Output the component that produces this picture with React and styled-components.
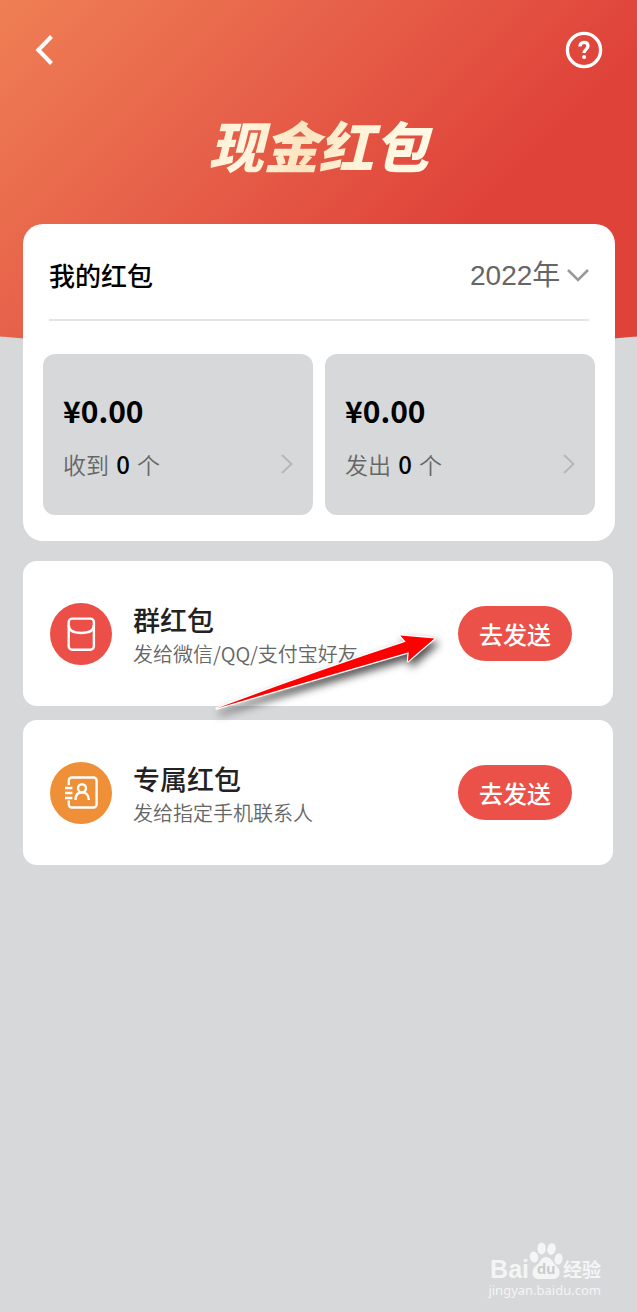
import React, { useState } from 'react'
import styled, { createGlobalStyle } from 'styled-components'

const rows = [
    { id: 'group', title: '群红包', desc: '发给微信/QQ/支付宝好友', color: '#eb4f48', icon: <EnvelopeIcon />, pointed: true },
    { id: 'exclusive', title: '专属红包', desc: '发给指定手机联系人', color: '#ef8f37', icon: <ContactIcon /> },
]

const stats = [
    { id: 'received', label: '收到', amount: '¥0.00', count: 0 },
    { id: 'sent', label: '发出', amount: '¥0.00', count: 0 },
]

function BackIcon() {
    return <svg width='22' height='32' viewBox='0 0 22 32' fill='none' stroke='#fff' strokeWidth='4' aria-hidden='true'>
        <path d='M18.5 2.5L5.3 16L18.5 29.5' />
    </svg>
}

function HelpIcon() {
    return <svg width='38' height='38' viewBox='0 0 38 38' fill='none' stroke='#fff' strokeWidth='3.3' aria-hidden='true'>
        <circle cx='19' cy='19' r='16.6' />
        <path d='M15 15.6c0-2.8 1.6-4.200 4-4.200s4 1.500 4 3.700c0 3-3.900 3.200-3.900 7' />
        <circle cx='19.1' cy='26' r='2' fill='#fff' stroke='none' />
    </svg>
}

function EnvelopeIcon() {
    return <svg width='62' height='62' viewBox='0 0 62 62' fill='none' stroke='#fff' strokeWidth='2.4' aria-hidden='true'>
        <rect x='18.7' y='15.6' width='25.2' height='31.2' rx='3.6' />
        <path d='M18.7 22c0 5.5 3.6 8 12.6 8s12.6-2.500 12.6-8' />
    </svg>
}

function ContactIcon() {
    return <svg width='62' height='62' viewBox='0 0 62 62' fill='none' stroke='#fff' strokeWidth='2.4' aria-hidden='true'>
        <path d='M18.8 23v-4.500a3 3 0 0 1 3-3h21.800a3 3 0 0 1 3 3v24a3 3 0 0 1-3 3h-21.800a3 3 0 0 1-3-3v-4' />
        <path d='M15 26h7.4M15 31h7.4M15 36h7.4' />
        <circle cx='32' cy='26.3' r='4' />
        <path d='M25.5 38c0-4.800 2.500-7.700 6.500-7.700s6.800 2.900 6.800 7.700' />
    </svg>
}

function Chevron() {
    return <svg width='12' height='22' viewBox='0 0 12 22' fill='none' stroke='#b4b5b7' strokeWidth='1.8' aria-hidden='true'>
        <path d='M1 2L10.5 11L1 20' />
    </svg>
}

function ArrowMark() {
    return <Arrow width='248' height='100' viewBox='210 628 248 100' aria-hidden='true'>
        <path d='M216.5 708.5Q305 675 405.7 641.7L400.3 635.5L434.5 638.5L408 661.3L408.7 652.3Q310 681 216.5 708.5Z'
            fill='#fe0000' stroke='#fff' strokeWidth='2.4' strokeLinejoin='round' paintOrder='stroke' />
    </Arrow>
}

function Watermark() {
    return <Mark>
        <MarkTop>
            <span>Bai</span>
            <Paw>
                <svg width='34' height='38' viewBox='0 0 34 38' fill='#f4f5f5' aria-hidden='true'>
                    <ellipse cx='5' cy='15' rx='4.2' ry='5.6' transform='rotate(-12 5 15)' />
                    <ellipse cx='12.5' cy='6.5' rx='4.2' ry='6' />
                    <ellipse cx='22.5' cy='7' rx='4.2' ry='6' transform='rotate(12 22.5 7)' />
                    <ellipse cx='29.5' cy='17' rx='4' ry='5.6' transform='rotate(10 29.5 17)' />
                    <path d='M17 15c5 0 6 4 9 7.5 3 3 5 5 4.5 9-.5 4-3.5 5.5-7 5.500H11c-4 0-7.500-1.500-7.500-6 0-4 2-6 5-8.500S12 15 17 15z' />
                </svg>
                <b>du</b>
            </Paw>
            <MarkCn>经验</MarkCn>
        </MarkTop>
        <MarkUrl>jingyan.baidu.com</MarkUrl>
    </Mark>
}

function App() {
    const [year, setYear] = useState('2022')

    return (<>
        <GlobalStyle />
        <Page>
            <Hero>
                <NavBar>
                    <IconButton type='button' aria-label='返回'><BackIcon /></IconButton>
                    <IconButton type='button' aria-label='帮助'><HelpIcon /></IconButton>
                </NavBar>
                <HeroTitle>现金红包</HeroTitle>
            </Hero>
            <Content>
                <Summary>
                    <SummaryHead>
                        <h2>我的红包</h2>
                        <YearPicker>
                            <select aria-label='年份' value={year} onChange={(e) => setYear(e.target.value)}>
                                <option value='2022'>2022年</option>
                                <option value='2021'>2021年</option>
                            </select>
                            <svg width='22' height='14' viewBox='0 0 22 14' fill='none' stroke='#999' strokeWidth='2.6' aria-hidden='true'>
                                <path d='M1 2L11 12L21 2' />
                            </svg>
                        </YearPicker>
                    </SummaryHead>
                    <Stats>
                        {stats.map((s) => <Stat key={s.id} href={`#${s.id}`}>
                            <Amount>{s.amount}</Amount>
                            <StatLine>
                                <span>{s.label} <b>{s.count}</b> 个</span>
                                <Chevron />
                            </StatLine>
                        </Stat>)}
                    </Stats>
                </Summary>
                <Rows>
                    {rows.map((r) => <Row key={r.id}>
                        <Badge $color={r.color}>{r.icon}</Badge>
                        <RowText>
                            <h3>{r.title}</h3>
                            <p>{r.desc}</p>
                        </RowText>
                        <SendButton type='button'>去发送</SendButton>
                        {r.pointed && <ArrowMark />}
                    </Row>)}
                </Rows>
            </Content>
            <Watermark />
        </Page>
    </>)
}

export default App

const GlobalStyle = createGlobalStyle`
    *{
        box-sizing: border-box;
    }
    body{
        margin: 0;
        background-color: #d7d8da;
        font-family: "Noto Sans CJK SC", sans-serif;
    }
    h1, h2, h3, p{
        margin: 0;
    }
    button, select{
        font-family: inherit;
        border: none;
        cursor: pointer;
    }
`
const Page = styled.main`
    min-height: 100vh;
    display: flex;
    flex-direction: column;
`
const Hero = styled.header`
    height: 352px;
    display: flex;
    flex-direction: column;
    background: linear-gradient(135deg, #ef7f54 0%, #e7624a 34%, #df4239 70%, #df4239 100%);
    clip-path: ellipse(170% 100% at 50% 0);
`
const NavBar = styled.nav`
    display: flex;
    justify-content: space-between;
    align-items: center;
    height: 100px;
    padding: 0 34px 0 33px;
`
const IconButton = styled.button`
    display: flex;
    padding: 0;
    background: transparent;
`
const HeroTitle = styled.h1`
    align-self: center;
    padding: 0 12px;
    font-size: 55px;
    line-height: 88px;
    font-weight: 900;
    font-style: italic;
    color: transparent;
    background: linear-gradient(100deg, #fbe6c4 0%, #fff6e0 20%, #fbe4bf 45%, #fff3d8 65%, #fffbea 100%);
    background-clip: text;
`
const Content = styled.div`
    display: flex;
    flex-direction: column;
    gap: 20px;
    margin-top: -128px;
    padding: 0 22px 0 23px;
    position: relative;
`
const Summary = styled.section`
    padding: 0 20px 26px;
    border-radius: 20px;
    background-color: #fff;
`
const SummaryHead = styled.div`
    display: flex;
    justify-content: space-between;
    align-items: center;
    height: 97px;
    margin: 0 6px 33px;
    padding-top: 6px;
    border-bottom: 2px solid #e4e4e5;

    h2{
        font-size: 26px;
        line-height: 40px;
        font-weight: 500;
        color: #000;
    }
`
const YearPicker = styled.div`
    display: flex;
    align-items: center;
    gap: 6px;

    select{
        appearance: none;
        padding: 2px 0 0;
        background: transparent;
        color: #666;
        font-family: "Liberation Sans", "Noto Sans CJK SC", sans-serif;
        font-size: 28px;
        line-height: 40px;
    }
`
const Stats = styled.div`
    display: grid;
    grid-template-columns: 1fr 1fr;
    gap: 12px;
`
const Stat = styled.a`
    display: flex;
    flex-direction: column;
    gap: 17px;
    height: 161px;
    padding: 36px 20px 0;
    border-radius: 12px;
    background-color: #d7d8da;
    text-decoration: none;
`
const Amount = styled.strong`
    font-size: 30px;
    line-height: 40px;
    font-weight: 700;
    color: #000;
`
const StatLine = styled.div`
    display: flex;
    justify-content: space-between;
    align-items: center;
    font-size: 23px;
    line-height: 34px;
    font-weight: 350;
    color: #666;

    b{
        margin: 0 2px;
        font-size: 24px;
        font-weight: 500;
        color: #000;
    }
`
const Rows = styled.div`
    display: flex;
    flex-direction: column;
    gap: 14px;
    margin-right: 2px;
`
const Row = styled.section`
    position: relative;
    display: flex;
    align-items: center;
    height: 145px;
    padding: 0 41px 0 27px;
    border-radius: 14px;
    background-color: #fff;
`
const Badge = styled.div`
    display: flex;
    flex: none;
    width: 62px;
    height: 62px;
    border-radius: 50%;
    background-color: ${({ $color }) => $color};
`
const RowText = styled.div`
    flex: 1;
    padding: 3px 0 0 21px;

    h3{
        font-size: 27px;
        line-height: 38px;
        font-weight: 500;
        color: #222;
    }
    p{
        font-size: 20px;
        line-height: 30px;
        font-weight: 350;
        color: #666;
    }
`
const SendButton = styled.button`
    flex: none;
    width: 114px;
    height: 55px;
    padding: 0;
    border-radius: 28px;
    background-color: #ec5149;
    color: #fff;
    font-size: 24px;
    line-height: 36px;
    font-weight: 500;
`
const Arrow = styled.svg`
    position: absolute;
    top: 67px;
    right: 155px;
    z-index: 2;
    overflow: visible;
    filter: drop-shadow(3px 5px 4px rgba(0, 0, 0, 0.7));
    pointer-events: none;
`
const Mark = styled.footer`
    display: flex;
    flex-direction: column;
    align-items: flex-end;
    margin-top: auto;
    padding: 0 36px 12px 0;
    color: #f4f5f5;
`
const MarkTop = styled.div`
    display: flex;
    align-items: flex-end;
    font-family: "Liberation Sans", sans-serif;
    font-size: 25px;
    line-height: 22px;
    font-weight: 700;
`
const Paw = styled.span`
    position: relative;
    display: flex;

    b{
        position: absolute;
        left: 8px;
        bottom: 1px;
        color: #c9cacc;
        font-size: 15px;
        line-height: 20px;
    }
`
const MarkCn = styled.span`
    font-family: "Noto Sans CJK SC", sans-serif;
    font-size: 19px;
    line-height: 22px;
`
const MarkUrl = styled.span`
    font-family: "Noto Sans", sans-serif;
    font-size: 13px;
    line-height: 20px;
`
